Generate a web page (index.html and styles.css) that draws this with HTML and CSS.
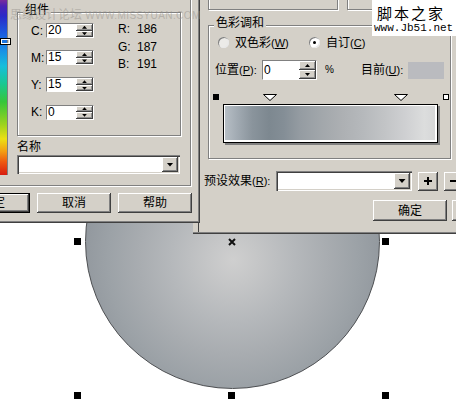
FILE: index.html
```html
<!DOCTYPE html>
<html lang="zh-CN">
<head>
<meta charset="utf-8">
<title>渐变填充</title>
<link rel="stylesheet" href="styles.css">
</head>
<body>
<div class="stage">
  <div class="shape"></div>
  <span class="handle h-tl"></span>
  <span class="handle h-tr"></span>
  <span class="handle h-bl"></span>
  <span class="handle h-bm"></span>
  <span class="handle h-br"></span>
  <svg class="center-mark" width="8" height="8" viewBox="0 0 8 8"><path d="M1 1L7 7M7 1L1 7" stroke="#111" stroke-width="2"/></svg>

  <section class="dlg dlg-right">
    <div class="top-boxes"><div class="etch box-a"></div><div class="etch box-b"></div></div>
    <div class="grp grp-blend">
      <span class="grp-title">色彩调和</span>
      <div class="radio-row">
        <span class="radio-item r1"><span class="radio off"></span><span class="rtext">双色彩<span class="acc">(<u>W</u>)</span></span></span>
        <span class="radio-item"><span class="radio on"></span><span class="rtext">自订<span class="acc">(<u>C</u>)</span></span></span>
      </div>
      <div class="pos-row">
        <span class="lbl-pos">位置<span class="acc">(<u>P</u>):</span></span>
        <span class="field field-pos"><span class="val">0</span><span class="spin"><i class="up"></i><i class="dn"></i></span></span>
        <span class="pct">%</span>
        <span class="lbl-cur">目前<span class="acc">(<u>U</u>):</span></span>
        <span class="swatch"></span>
      </div>
      <div class="marker-row">
        <span class="m-sq filled"></span>
        <svg class="m-tri t1" width="14" height="7" viewBox="0 0 14 7"><path d="M0.5 0.5H13.5L7 6.5Z" fill="#fff" stroke="#000"/></svg>
        <svg class="m-tri t2" width="14" height="7" viewBox="0 0 14 7"><path d="M0.5 0.5H13.5L7 6.5Z" fill="#fff" stroke="#000"/></svg>
        <span class="m-sq hollow"></span>
      </div>
      <div class="gbar"><div class="gfill"></div></div>
    </div>
    <div class="preset-row">
      <span class="lbl-preset">预设效果<span class="acc">(<u>R</u>):</span></span>
      <span class="combo combo-preset"><span class="drop"></span></span>
      <span class="btn sqbtn"><svg width="10" height="10" viewBox="0 0 10 10"><path d="M5 1V9M1 5H9" stroke="#000" stroke-width="2"/></svg></span>
      <span class="btn sqbtn"><svg width="10" height="10" viewBox="0 0 10 10"><path d="M1 5H9" stroke="#000" stroke-width="2"/></svg></span>
    </div>
    <div class="btn-row-right">
      <span class="btn tall">确定</span>
      <span class="btn tall">取消</span>
    </div>
  </section>

  <section class="dlg dlg-left">
    <div class="panel">
      <div class="spectrum"><span class="spec-mark"></span></div>
      <div class="panel-body">
        <div class="grp grp-comp">
          <span class="grp-title">组件</span>
          <div class="comp-body">
            <div class="cmyk">
              <span class="lbl">C:</span>
              <span class="field field-num"><span class="val">20</span><span class="spin"><i class="up"></i><i class="dn"></i></span></span>
              <span class="lbl">M:</span>
              <span class="field field-num"><span class="val">15</span><span class="spin"><i class="up"></i><i class="dn"></i></span></span>
              <span class="lbl">Y:</span>
              <span class="field field-num"><span class="val">15</span><span class="spin"><i class="up"></i><i class="dn"></i></span></span>
              <span class="lbl">K:</span>
              <span class="field field-num"><span class="val">0</span><span class="spin"><i class="up"></i><i class="dn"></i></span></span>
            </div>
            <div class="rgb">
              <span>R:</span><span>186</span>
              <span>G:</span><span>187</span>
              <span>B:</span><span>191</span>
            </div>
          </div>
        </div>
        <div class="name-lbl">名称</div>
        <div class="combo combo-name"><span class="drop"></span></div>
      </div>
    </div>
    <div class="btn-row-left">
      <span class="btn default">确定</span>
      <span class="btn">取消</span>
      <span class="btn">帮助</span>
    </div>
    <div class="wm-miss">思缘设计论坛 <span class="wm-url">WWW.MISSYUAN.COM</span></div>
  </section>

  <div class="wm-jb">
    <span class="wm-jb-cn">脚本之家</span>
    <span class="wm-jb-url">www.Jb51.net</span>
  </div>
</div>
</body>
</html>
```

FILE: styles.css
```css
* { box-sizing: border-box; margin: 0; padding: 0; }
html, body { width: 456px; height: 410px; }
body {
  overflow: hidden;
  background: #fff;
  color: #000;
  font-family: "Liberation Sans", "Noto Sans CJK SC", sans-serif;
  font-size: 12px;
  line-height: 14px;
}
.stage { position: relative; width: 456px; height: 410px; overflow: hidden; background: #fff; }

/* ---------- canvas object ---------- */
.shape {
  position: absolute; left: 85px; top: 94px;
  width: 295px; height: 295px;
  border-radius: 50%;
  border: 1px solid #4d4f52;
  background: radial-gradient(circle at 147px 165px,
    #cfcfcf 0, #c5c6c7 25px, #b5b8bb 62px, #a8acb0 95px,
    #9ca2a7 125px, #92989e 150px, #8a9197 180px);
}
.handle { position: absolute; width: 7px; height: 7px; background: #000; }
.h-tl { left: 74px; top: 238px; }
.h-tr { left: 382px; top: 238px; }
.h-bl { left: 74px; top: 392px; }
.h-bm { left: 228px; top: 392px; }
.h-br { left: 382px; top: 392px; }
.center-mark { position: absolute; left: 228px; top: 238px; }

/* ---------- dialogs ---------- */
.dlg { position: absolute; top: 0; background: #d4d0c8; }
.dlg-left {
  left: 0; width: 200px; height: 223px;
  box-shadow: inset -1px -1px 0 #404040, inset -2px -2px 0 #808080;
}
.dlg-right {
  left: 193px; width: 280px; height: 234px;
  padding-left: 15px;
  box-shadow: inset 0 -1px 0 #404040, inset 0 -2px 0 #808080,
              inset 5px 0 0 #d4d0c8, inset 6px 0 0 #404040;
}

/* group boxes */
.grp { border: 1px solid #808080; box-shadow: inset 1px 1px 0 #fff, 1px 1px 0 #fff; }
.grp-title {
  display: block; width: max-content;
  margin: -10px 0 0 5px; padding: 0 2px;
  background: #d4d0c8;
}
.etch { border: 1px solid #808080; box-shadow: inset 1px 1px 0 #fff, 1px 1px 0 #fff; }

.acc { font-size: 11px; }
.acc u { text-decoration: underline; text-underline-offset: 1px; }

/* sunken fields */
.field {
  display: flex; background: #fff;
  border: 1px solid; border-color: #808080 #fff #fff #808080;
}
.field .val { flex: 1; padding-left: 1px; }
.spin { display: flex; flex-direction: column; width: 17px; background: #d4d0c8; }
.spin i {
  flex: 1; display: flex; align-items: center; justify-content: center;
  box-shadow: inset -1px -1px 0 #404040, inset 1px 1px 0 #fff, inset -2px -2px 0 #909090;
}
.spin i::after { content: ""; width: 5px; height: 3px; background: #000; }
.spin .up::after { clip-path: polygon(50% 0, 100% 100%, 0 100%); }
.spin .dn::after { clip-path: polygon(0 0, 100% 0, 50% 100%); }

.combo {
  display: flex; justify-content: flex-end;
  background: #fff; padding: 2px;
  box-shadow: inset 1px 1px 0 #808080, inset 2px 2px 0 #404040,
              inset -1px -1px 0 #fff, inset -2px -2px 0 #d4d0c8;
}
.drop {
  width: 16px; display: flex; align-items: center; justify-content: center;
  background: #d4d0c8;
  box-shadow: inset -1px -1px 0 #404040, inset 1px 1px 0 #fff, inset -2px -2px 0 #808080;
}
.drop::after { content: ""; width: 7px; height: 4px; background: #000; clip-path: polygon(0 0, 100% 0, 50% 100%); }

.btn {
  display: flex; align-items: center; justify-content: center;
  flex: none; width: 74px; height: 20px;
  background: #d4d0c8;
  box-shadow: inset -1px -1px 0 #404040, inset 1px 1px 0 #fff, inset -2px -2px 0 #808080;
}
.btn.default { border: 1px solid #000; }
.btn.tall { height: 21px; }

/* ---------- left dialog ---------- */
.panel {
  display: flex; width: 192px; height: 187px;
  box-shadow: inset -1px -1px 0 #fff, inset -2px -2px 0 #808080;
}
.spectrum {
  position: relative; flex: none; width: 8px; height: 175px;
  border-right: 1px solid #808080;
  background: linear-gradient(to bottom,
    #7a2c9c 0, #4a22b4 6px, #2a2ac8 16px, #1c58de 32px, #1a8ee6 50px,
    #16bedc 66px, #18c890 84px, #36c63a 102px, #9ad21e 124px,
    #ece012 139px, #f3a012 151px, #ee5810 162px, #d81c10 175px);
}
.spec-mark {
  position: absolute; left: 0; top: 38px; width: 11px; height: 7px;
  border: 1px solid #000; box-shadow: inset 0 0 0 1px #fff;
}
.panel-body { padding: 12px 0 0 9px; }
.grp-comp { width: 164px; height: 124px; }
.comp-body { display: flex; align-items: flex-start; padding: 6px 0 0 13px; }
.cmyk {
  display: grid; grid-template-columns: 15px 48px;
  grid-auto-rows: 15px; row-gap: 12.2px; align-items: center;
}
.field-num { height: 15px; }
.field-num .val { line-height: 13px; }
.rgb {
  display: grid; grid-template-columns: 19px auto;
  line-height: 17.5px; margin: -2px 0 0 24px;
}
.name-lbl { margin-top: 4px; }
.combo-name { margin-top: 1px; width: 163px; height: 19px; }
.btn-row-left {
  display: flex; justify-content: flex-end; gap: 7px;
  width: 192px; margin-top: 6px;
}
.wm-miss {
  position: absolute; left: 10px; top: 8px;
  color: rgba(150, 146, 140, 0.5);
  font-size: 12px; white-space: nowrap;
}
.wm-url { font-size: 10px; letter-spacing: 0.4px; }

/* ---------- right dialog ---------- */
.top-boxes { display: flex; gap: 9px; margin-top: -12px; }
.etch { height: 22px; }
.box-a { width: 144px; }
.box-b { width: 140px; }
.grp-blend { width: 243px; height: 134px; margin-top: 15px; }
.radio-row { display: flex; align-items: center; height: 13px; margin: 6px 0 0 9px; }
.radio-item { display: flex; align-items: center; gap: 6px; }
.r1 { width: 91px; }
.rtext { white-space: nowrap; }
.radio {
  position: relative; flex: none; width: 11px; height: 11px; border-radius: 50%;
  background: #fff;
  box-shadow: inset 1px 1px 0 #808080, inset -1px -1px 0 #e8e8e8;
}
.radio.off { background: #ecebe8; }
.radio.on::after {
  content: ""; position: absolute; left: 4px; top: 4px;
  width: 3px; height: 3px; border-radius: 50%; background: #000;
}
.pos-row { display: flex; align-items: center; height: 20px; margin: 11px 0 0 6px; }
.lbl-pos { width: 47px; }
.field-pos { width: 55px; height: 20px; }
.field-pos .val { line-height: 18px; }
.pct { margin-left: 8px; font-size: 10px; }
.lbl-cur { margin-left: 27px; width: 47px; }
.swatch { width: 36px; height: 17px; background: rgb(186, 187, 191); }
.marker-row { display: flex; align-items: flex-start; height: 7px; margin: 14px 0 0 4px; }
.m-sq { width: 6px; height: 6px; flex: none; }
.m-sq.filled { background: #000; }
.m-sq.hollow { background: #fff; border: 1px solid #000; margin-left: 35px; }
.m-tri { flex: none; display: block; }
.t1 { margin-left: 44px; }
.t2 { margin-left: 117px; }
.gbar {
  width: 215px; height: 39px; margin: 3px 0 0 14px;
  border: 1px solid #000; background: #fff;
  padding: 1px 2px 2px 1px;
  box-shadow: 2px 2px 0 #808080;
}
.gfill {
  width: 100%; height: 100%;
  background: linear-gradient(to right,
    #b6bec5 0%, #a1aab2 6%, #8a949c 13%, #7d8890 21%, #848e96 28%,
    #959ca2 36%, #a2a7ab 46%, #adb0b3 56%, #b6b9bc 66%, #c2c4c6 76%,
    #cfd0d2 86%, #dcdddd 95%, #d6d7d8 100%);
}
.preset-row { display: flex; align-items: center; height: 20px; margin: 12px 0 0 -4px; }
.lbl-preset { width: 72px; }
.combo-preset { width: 136px; height: 20px; }
.sqbtn { width: 20px; height: 19px; margin-left: 6px; }
.btn-row-right { display: flex; gap: 5px; margin: 9px 0 0 165px; }

/* ---------- watermark ---------- */
.wm-jb {
  position: absolute; left: 372px; top: 0; width: 84px; height: 36px;
  background: #fff;
  display: flex; flex-direction: column; padding: 5px 0 0 5px;
}
.wm-jb-cn { font-size: 15px; line-height: 17px; letter-spacing: 2px; }
.wm-jb-url { font-family: "Liberation Mono", monospace; font-size: 11px; line-height: 12px; margin-left: -3px; }
```
